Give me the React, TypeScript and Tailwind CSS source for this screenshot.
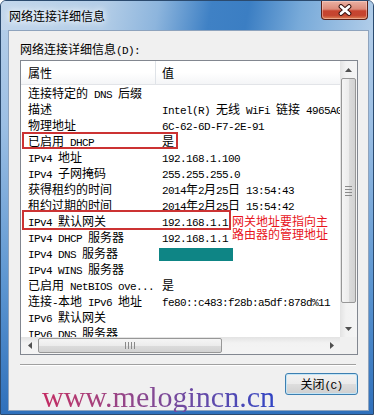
import React from 'react';

const LATIN = "font-['Liberation_Mono',monospace] text-[11px] tracking-[-0.6px]";

// splits ascii runs out so they get the narrow mono face (like SimSun's half-width latin)
function Txt({ s }: { s: string }) {
  const parts = s.split(/([\x20-\x7e]+)/).filter(Boolean);
  return (
    <>
      {parts.map((p, i) =>
        /^[\x20-\x7e]+$/.test(p) ? (
          <span key={i} className={LATIN}>{p}</span>
        ) : (
          <span key={i}>{p}</span>
        )
      )}
    </>
  );
}

const TEAL = '__teal__';

const rows: [string, string][] = [
  ['连接特定的 DNS 后缀', ''],
  ['描述', 'Intel(R) 无线 WiFi 链接 4965AG'],
  ['物理地址', '6C-62-6D-F7-2E-91'],
  ['已启用 DHCP', '是'],
  ['IPv4 地址', '192.168.1.100'],
  ['IPv4 子网掩码', '255.255.255.0'],
  ['获得租约的时间', '2014年2月25日 13:54:43'],
  ['租约过期的时间', '2014年2月25日 15:54:42'],
  ['IPv4 默认网关', '192.168.1.1'],
  ['IPv4 DHCP 服务器', '192.168.1.1'],
  ['IPv4 DNS 服务器', TEAL],
  ['IPv4 WINS 服务器', ''],
  ['已启用 NetBIOS ove...', '是'],
  ['连接-本地 IPv6 地址', 'fe80::c483:f28b:a5df:878d%11'],
  ['IPv6 默认网关', ''],
  ['IPv6 DNS 服务器', ''],
];

function Arrow({ dir }: { dir: 'up' | 'down' | 'left' | 'right' }) {
  const pts = {
    up: '0,4 3.5,0 7,4',
    down: '0,0 7,0 3.5,4',
    left: '4,0 4,7 0,3.5',
    right: '0,0 4,3.5 0,7',
  }[dir];
  const vertical = dir === 'up' || dir === 'down';
  return (
    <svg width={vertical ? 7 : 4} height={vertical ? 4 : 7} viewBox={vertical ? '0 0 7 4' : '0 0 4 7'}>
      <polygon points={pts} fill="#505050" />
    </svg>
  );
}

function CloseButton() {
  return (
    <div className="flex h-[19px] w-[47px] items-center justify-center rounded-b-[4px] border border-t-0 border-[#5a2018] bg-[linear-gradient(180deg,#eab1a3_0%,#dc8b7a_45%,#c7442f_55%,#c54530_80%,#de8456_100%)] shadow-[inset_0_0_0_1px_rgba(255,220,210,0.45)]">
      <svg width="16" height="12" viewBox="0 0 16 12">
        <path d="M4 2.5 L12 9.5 M12 2.5 L4 9.5" stroke="#3a1410" strokeWidth="4.8" strokeLinecap="round" />
        <path d="M4 2.5 L12 9.5 M12 2.5 L4 9.5" stroke="#ffffff" strokeWidth="2.8" strokeLinecap="round" />
      </svg>
    </div>
  );
}

export default function App() {
  return (
    <div className="relative h-[417px] w-[377px] overflow-hidden bg-white font-['Noto_Sans_CJK_SC',sans-serif] text-[12px] text-black">
      {/* window frame */}
      <div className="flex h-[415px] w-[374px] flex-col rounded-t-[6px] border border-[#2b4a6e] bg-[linear-gradient(180deg,#b9d1ea_0%,#9cbfe4_30%,#5a94d0_70%,#2f70bb_100%)]">
        {/* title bar */}
        <div className="flex h-[29px] items-start justify-between rounded-t-[5px] bg-[linear-gradient(100deg,#c3d7ec_0%,#b3cde7_28%,#8db5dd_42%,#3f81c5_56%,#3b7ec3_66%,#78aad9_80%,#b1cde9_100%)] pl-[8px] pr-[5px]">
          <span className="mt-[7px] leading-[16px] [text-shadow:0_0_6px_#ffffff,0_0_10px_#ffffff]">网络连接详细信息</span>
          <CloseButton />
        </div>

        {/* client area */}
        <div className="mb-[3px] ml-[7px] mr-[4px] flex flex-1 flex-col border border-[#8ea3bd] bg-[#f0f0f0] pl-[11px] pt-[11px]">
          <div className="h-[14px] leading-[14px]">
            <Txt s="网络连接详细信息(D):" />
          </div>

          {/* list view */}
          <div className="mt-[4px] flex h-[295px] w-[338px] flex-col border border-[#828790] bg-white">
            <div className="flex h-[276px]">
              <div className="relative w-[319px] overflow-hidden">
                <div className="flex h-[24px] border-b border-[#e2e4e8] bg-[linear-gradient(180deg,#ffffff_0%,#ffffff_50%,#f4f5f7_100%)] leading-[23px]">
                  <div className="w-[135px] border-r border-[#dfe3e8] pl-[7px]">属性</div>
                  <div className="pl-[6px]">值</div>
                </div>
                {rows.map(([name, value]) => (
                  <div key={name} className="flex h-[16px] items-start whitespace-pre leading-[16px]">
                    <div className="w-[135px] shrink-0 overflow-hidden pl-[7px]">
                      <Txt s={name} />
                    </div>
                    <div className="flex-1 overflow-hidden pl-[6px]">
                      {value === TEAL ? (
                        <div className="-ml-[3px] mt-[3px] h-[13px] w-[74px] bg-[#0e8585]" />
                      ) : (
                        <Txt s={value} />
                      )}
                    </div>
                  </div>
                ))}

                {/* annotations */}
                <div className="absolute left-[1px] top-[71px] h-[17px] w-[156px] border-2 border-[#cc3333]" />
                <div className="absolute left-[1px] top-[149px] h-[20px] w-[209px] border-2 border-[#cc3333]" />
                <div className="absolute left-[211px] top-[153px] text-[12px] leading-[13px] text-[#e8141c]">
                  网关地址要指向主
                  <br />
                  路由器的管理地址
                </div>
              </div>

              {/* vertical scrollbar */}
              <div className="flex w-[17px] flex-col bg-[linear-gradient(90deg,#e3e3e3_0%,#f2f2f2_35%,#f4f4f4_100%)]">
                <div className="flex h-[17px] items-center justify-center">
                  <Arrow dir="up" />
                </div>
                <div className="mx-[1px] flex h-[225px] flex-col items-center justify-center gap-[2px] rounded-[2px] border border-[#979797] bg-[linear-gradient(90deg,#f5f5f5_0%,#ececec_50%,#dcdcdc_51%,#d2d2d2_100%)]">
                  <div className="h-[1px] w-[7px] bg-[#8a8a8a]" />
                  <div className="h-[1px] w-[7px] bg-[#8a8a8a]" />
                  <div className="h-[1px] w-[7px] bg-[#8a8a8a]" />
                  <div className="h-[1px] w-[7px] bg-[#8a8a8a]" />
                </div>
                <div className="h-[17px]" />
                <div className="flex h-[17px] items-center justify-center">
                  <Arrow dir="down" />
                </div>
              </div>
            </div>

            {/* horizontal scrollbar */}
            <div className="flex h-[17px] bg-[linear-gradient(180deg,#e3e3e3_0%,#f2f2f2_35%,#f4f4f4_100%)]">
              <div className="flex w-[17px] items-center justify-center">
                <Arrow dir="left" />
              </div>
              <div className="my-[1px] flex w-[184px] items-center justify-center gap-[2px] rounded-[2px] border border-[#979797] bg-[linear-gradient(180deg,#f5f5f5_0%,#ececec_50%,#dcdcdc_51%,#d2d2d2_100%)]">
                <div className="h-[7px] w-[1px] bg-[#8a8a8a]" />
                <div className="h-[7px] w-[1px] bg-[#8a8a8a]" />
                <div className="h-[7px] w-[1px] bg-[#8a8a8a]" />
                <div className="h-[7px] w-[1px] bg-[#8a8a8a]" />
              </div>
              <div className="flex-1" />
              <div className="flex w-[17px] items-center justify-center">
                <Arrow dir="right" />
              </div>
              <div className="w-[17px] bg-[#f0f0f0]" />
            </div>
          </div>

          <div className="mt-[9px] h-[2px] w-[336px] border-t border-b border-t-[#a0a0a0] border-b-white" />

          <div className="mt-[7px] flex w-[338px] justify-end">
            <button className="h-[22px] w-[73px] rounded-[3px] border border-[#3c7fb1] bg-[linear-gradient(180deg,#f2f2f2_0%,#ebebeb_48%,#dddddd_52%,#cfcfcf_100%)] leading-[20px] shadow-[inset_0_0_0_1px_#c4e5f6]">
              <Txt s="关闭(C)" />
            </button>
          </div>
        </div>
      </div>

      {/* watermark */}
      <div className="absolute left-[42px] top-[382px] bg-gradient-to-r from-[#c42a62] to-[#2f44c4] bg-clip-text font-['Liberation_Serif',serif] text-[30px] leading-[30px] text-transparent">
        www.melogincn.cn
      </div>
    </div>
  );
}
